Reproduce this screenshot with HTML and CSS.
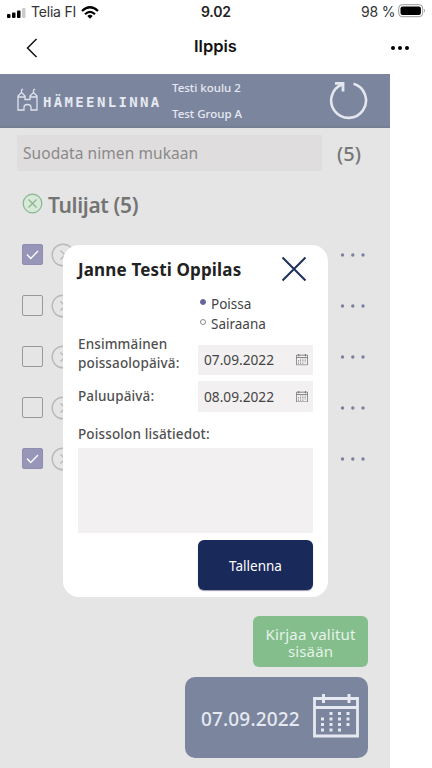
FILE: index.html
```html
<!DOCTYPE html>
<html lang="fi">
<head>
<meta charset="utf-8">
<title>Ilppis</title>
<link rel="stylesheet" href="styles.css">
</head>
<body>
<svg class="defs" width="0" height="0">
  <symbol id="calendar" viewBox="0 0 46 44">
    <path d="M1.500 4.500H44.500V42H1.500ZM1.500 13.500H44.500" fill="none" stroke="currentColor" stroke-width="2.800"/>
    <path d="M10.500 0V9M36 0V9" stroke="currentColor" stroke-width="3"/>
    <path d="M16.500 19.500H38M8 25H38M8 30.500H38M8 36H29" stroke="currentColor" stroke-width="3" stroke-dasharray="3 5.500" fill="none"/>
  </symbol>
  <symbol id="person" viewBox="0 0 24 24">
    <g fill="none" stroke="#b9b9b9" stroke-width="1.400"><circle cx="12" cy="12" r="10.800"/><path d="M9.500 7.500L14 12L9.500 16.500"/></g>
  </symbol>
  <symbol id="more" viewBox="0 0 26 4">
    <g fill="#7c819d"><circle cx="2.500" cy="2" r="1.700"/><circle cx="12.800" cy="2" r="1.700"/><circle cx="23" cy="2" r="1.700"/></g>
  </symbol>
</svg>
<div class="phone">
  <div class="status">
    <svg class="signal" width="19" height="10" viewBox="0 0 19 10"><rect y="6" width="3.500" height="4" rx="1"/><rect x="5" y="4.500" width="3.500" height="5.500" rx="1"/><rect x="10" y="2.500" width="3.500" height="7.500" rx="1"/><rect x="15" y="0" width="3.500" height="10" rx="1" fill="#ccc"/></svg>
    <span class="carrier">Telia FI</span>
    <svg class="wifi" width="18" height="13" viewBox="0 0 18 13"><g fill="none" stroke="#000" stroke-width="2.200"><path d="M1 5Q9-2.500 17 5"/><path d="M4 8.200Q9 3.600 14 8.200"/></g><path d="M6.300 10Q9 7.700 11.700 10L9 12.700Z"/></svg>
    <span class="clock">9.02</span>
    <span class="percent">98 %</span>
    <svg class="battery" width="28" height="14" viewBox="0 0 28 14"><rect x=".7" y=".7" width="24" height="12" rx="3.500" fill="none" stroke="#999"/><rect x="2.500" y="2.500" width="20.400" height="8.500" rx="2"/><path d="M26 4.800Q28 6.700 26 8.600Z" fill="#999"/></svg>
  </div>
  <div class="nav">
    <svg class="back" width="12" height="20" viewBox="0 0 12 20"><path d="M10.500 1L1.500 10L10.500 19" fill="none" stroke="#111" stroke-width="1.500"/></svg>
    <span class="nav-title">Ilppis</span>
    <svg class="nav-more" width="20" height="6" viewBox="0 0 20 6"><circle cx="3" cy="3" r="2"/><circle cx="10" cy="3" r="2"/><circle cx="17" cy="3" r="2"/></svg>
  </div>
  <div class="app">
    <header class="brand">
      <svg class="castle" width="22" height="24" viewBox="0 0 22 24"><g fill="none" stroke="#dfe3ed" stroke-width="1.300"><path d="M1 22V8L4.500 4.500L8 8V11.500H13V8L16.500 4.500L20 8V22H14V19.500Q14 16.500 10.500 16.500T7 19.500V22ZM1 9H8M13 9H20M4.500 5V2L6 1M16.500 5V2L18 1"/></g></svg>
      <span class="wordmark">HÄMEENLINNA</span>
      <div class="school"><span>Testi koulu 2</span><span class="group">Test Group A</span></div>
      <svg class="refresh" width="40" height="40" viewBox="0 0 40 40"><g fill="none" stroke="#e4e7ef"><path d="M24.500 3.800A17.400 17.400 0 1 1 13.500 4.200" stroke-width="2.600"/><path d="M6 3.300H14V11.500" stroke-width="2.800"/></g></svg>
    </header>
    <div class="filter"><div class="search">Suodata nimen mukaan</div><span class="total">(5)</span></div>
    <div class="heading">
      <svg width="21" height="21" viewBox="0 0 21 21"><g stroke="#87b78e" stroke-width="1.200"><circle cx="10.500" cy="10.500" r="9.300" fill="#d8e8d9"/><path d="M6.500 6.500L14.500 14.500M14.500 6.500L6.500 14.500"/></g></svg>
      <span>Tulijat (5)</span>
    </div>
    <div class="rows">
      <div class="row"><span class="check on"><svg width="13" height="10" viewBox="0 0 13 10"><path d="M1 4.500L4.700 8.500L12 1"/></svg></span><svg class="avatar"><use href="#person"/></svg><svg class="dots"><use href="#more"/></svg></div>
      <div class="row"><span class="check"></span><svg class="avatar"><use href="#person"/></svg><svg class="dots"><use href="#more"/></svg></div>
      <div class="row"><span class="check"></span><svg class="avatar"><use href="#person"/></svg><svg class="dots"><use href="#more"/></svg></div>
      <div class="row"><span class="check"></span><svg class="avatar"><use href="#person"/></svg><svg class="dots"><use href="#more"/></svg></div>
      <div class="row"><span class="check on"><svg width="13" height="10" viewBox="0 0 13 10"><path d="M1 4.500L4.700 8.500L12 1"/></svg></span><svg class="avatar"><use href="#person"/></svg><svg class="dots"><use href="#more"/></svg></div>
    </div>
    <div class="footer">
      <div class="checkin">Kirjaa valitut sisään</div>
      <div class="day"><span>07.09.2022</span><svg width="46" height="44"><use href="#calendar"/></svg></div>
    </div>
    <section class="modal">
      <div class="modal-head"><h1>Janne Testi Oppilas</h1><svg width="26" height="26" viewBox="0 0 26 26"><path d="M1.500 1.500L24.500 24.500M24.500 1.500L1.500 24.500" stroke="#1d3058" stroke-width="2"/></svg></div>
      <div class="options">
        <div class="option"><i class="radio picked"></i><span class="absent">Poissa</span></div>
        <div class="option"><i class="radio"></i><span class="ill">Sairaana</span></div>
      </div>
      <div class="fields">
        <div class="label first">Ensimmäinen<br>poissaolopäivä:</div>
        <div class="date"><span>07.09.2022</span><svg viewBox="0 0 46 44"><use href="#calendar"/></svg></div>
        <div class="label">Paluupäivä:</div>
        <div class="date"><span>08.09.2022</span><svg viewBox="0 0 46 44"><use href="#calendar"/></svg></div>
      </div>
      <div class="label notes-label">Poissolon lisätiedot:</div>
      <div class="notes"></div>
      <div class="save">Tallenna</div>
    </section>
  </div>
</div>
</body>
</html>
```
FILE: styles.css
```css
* { box-sizing: border-box; }
body { margin: 0; background: #fff; font-family: "Noto Sans", sans-serif; color: #505050; }
svg { display: block; flex: none; }
span, .label, h1 { white-space: nowrap; }
.defs { position: absolute; }
.phone { width: 432px; height: 768px; overflow: hidden; }

.status { height: 24px; display: flex; align-items: center; padding-left: 7px; font: 14px/24px Inter, sans-serif; color: #333; }
.signal { margin-top: 1px; }
.carrier { margin-left: 5px; width: 46px; letter-spacing: -.2px; }
.wifi { margin-left: 4px; }
.clock { margin-left: 102px; width: 40px; font-weight: 600; color: #222; letter-spacing: -.2px; }
.percent { margin-left: 120px; width: 35px; letter-spacing: -.2px; }
.battery { margin-left: 2px; margin-top: -2px; }

.nav { height: 49.500px; display: flex; align-items: center; padding-left: 26px; }
.back { margin-top: -2px; }
.nav-title { margin: -5px 0 0 156px; width: 60px; font: 600 16.500px/24px Inter, sans-serif; color: #111; }
.nav-more { margin: -2px 0 0 136px; }

.app { position: relative; width: 390px; height: 695px; background: #e5e5e5; display: flex; flex-direction: column; }
.brand { height: 54px; background: #7b859e; border-bottom: 2px solid #747f94; display: flex; align-items: center; padding-left: 17px; color: #e6e9f1; }
.castle { margin-top: 1px; }
.wordmark { margin: 4px 0 0 4px; width: 129px; font: bold 14px/16px "DejaVu Sans Mono", monospace; letter-spacing: 2.350px; }
.school { width: 157px; display: flex; flex-direction: column; gap: 10px; font-size: 11.500px; line-height: 16px; font-weight: 500; padding-top: 2px; }

.filter { display: flex; margin: 7px 0 0 17px; height: 36px; align-items: center; }
.search { width: 305px; height: 36px; background: #dfdddd; padding-left: 6px; font-size: 15.500px; line-height: 36px; color: #8a8a8a; letter-spacing: .07px; }
.total { margin: 2px 0 0 15px; font-size: 20px; font-weight: 500; color: #777; }
.heading { display: flex; align-items: center; margin: 18px 0 0 22px; height: 32px; gap: 5px; font-size: 21px; font-weight: 600; color: #747474; letter-spacing: -.35px; }
.heading svg { margin-top: -2px; }
.rows { margin: 8.500px 0 0 22px; }
.row { height: 51px; display: flex; align-items: center; }
.check { width: 21px; height: 21px; border: 1px solid #999; border-radius: 2px; display: flex; align-items: center; justify-content: center; }
.check.on { background: #9796b8; border-color: #8f8eb1; }
.check path { fill: none; stroke: #fff; stroke-width: 1.300; }
.avatar { width: 24px; height: 24px; margin-left: 8px; }
.dots { width: 26px; height: 4px; margin-left: 265px; }

.footer { margin: 131.500px 22px 0 185px; display: flex; flex-direction: column; align-items: flex-end; gap: 10px; }
.checkin { width: 115px; height: 51px; border-radius: 6px; background: #83be8c; color: #e6f3e8; text-align: center; font-size: 15px; line-height: 17px; padding: 10px 8px 0; letter-spacing: .15px; }
.day { width: 183px; height: 81px; border-radius: 10px; background: #7b859e; color: #e6e9f1; display: flex; align-items: center; justify-content: space-between; padding: 0 9px 0 16px; font-size: 19px; font-weight: 500; letter-spacing: .15px; }
.day span { margin-top: 3px; }
.day svg { margin-top: -3px; }

.modal { position: absolute; left: 62.500px; top: 171px; width: 265.500px; height: 352.500px; border-radius: 16px; background: #fff; padding: 0 15.500px; }
.modal-head { display: flex; align-items: center; justify-content: space-between; height: 49px; padding-right: 5.500px; }
h1 { margin: 2px 0 0; font-size: 17px; line-height: 24px; font-weight: 700; color: #222; letter-spacing: .15px; }
.options { padding-left: 122px; }
.option { display: flex; align-items: center; height: 20px; gap: 5px; font-size: 13.500px; color: #444; }
.radio { width: 6px; height: 6px; border: 1px solid #888; border-radius: 50%; margin-top: -3px; }
.picked { background: #66659a; border-color: #66659a; }
.fields { display: grid; grid-template-columns: 120px 114.500px; grid-template-rows: 30px 31px; row-gap: 6px; margin-top: 11.500px; }
.label { font-size: 13.500px; line-height: 19.500px; font-weight: 500; align-self: center; letter-spacing: .13px; }
.first { align-self: start; margin-top: -10.500px; }
.date { background: #f2f0f0; display: flex; align-items: center; justify-content: space-between; padding: 0 5px 0 6px; font-size: 13.700px; color: #444; }
.date span { margin-top: -1px; }
.date svg { width: 12px; height: 11.500px; color: #606060; }
.notes-label { margin-top: 12.500px; }
.notes { height: 85px; margin-top: 4px; background: #f2f0f0; }
.save { width: 115px; height: 50px; margin: 7px 0 0 120px; border-radius: 6px; background: #18295a; box-shadow: 0 1px 1px #9b9baa; color: #fff; font-size: 13.500px; line-height: 52px; text-align: center; }
```
